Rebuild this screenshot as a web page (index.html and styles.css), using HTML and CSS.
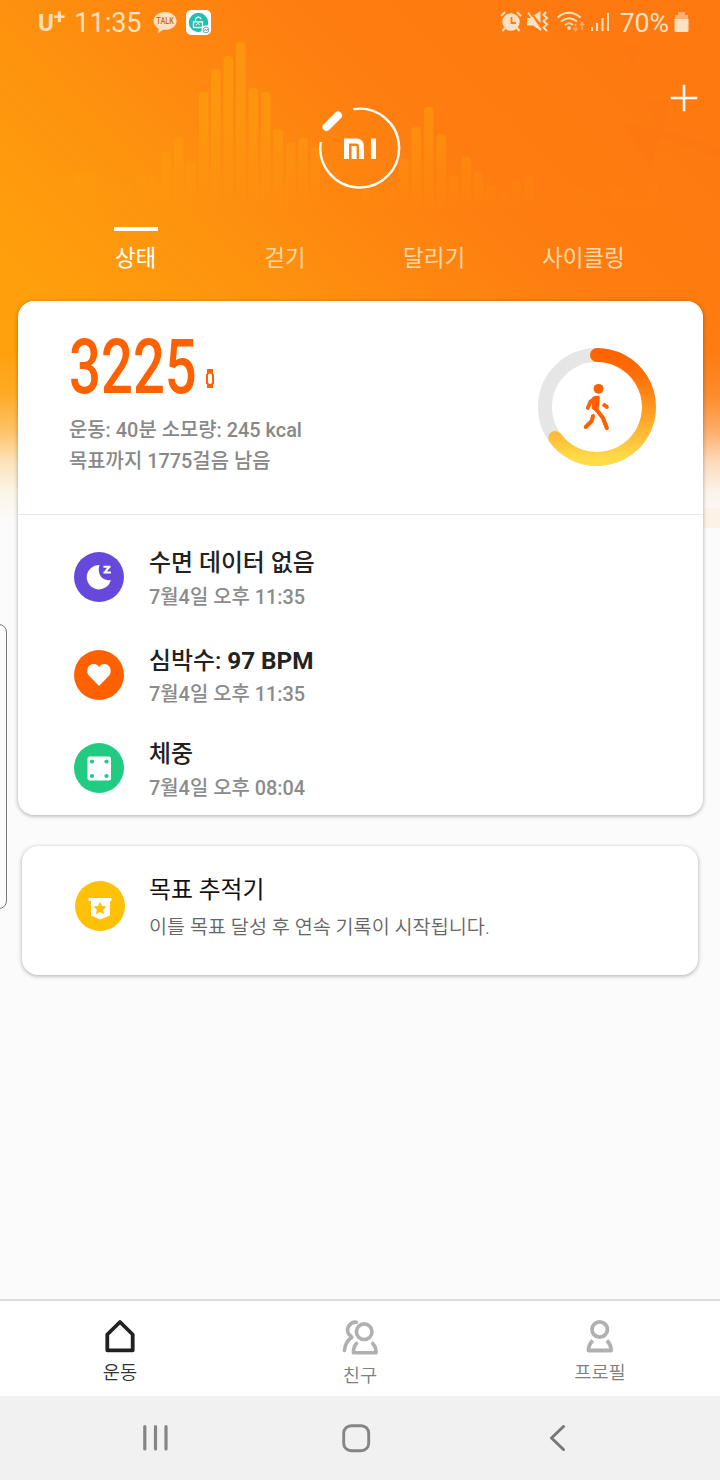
FILE: index.html
```html
<!DOCTYPE html>
<html lang="ko">
<head>
<meta charset="utf-8">
<title>Mi Fit</title>
<link rel="stylesheet" href="styles.css">
</head>
<body>
<div class="phone">
  <div class="backdrop"></div>
  <svg class="bars" width="720" height="220" viewBox="0 0 720 220">
    <defs>
      <linearGradient id="fade" gradientUnits="userSpaceOnUse" x1="0" y1="40" x2="0" y2="212">
        <stop offset="0" stop-color="#ffa60c" stop-opacity=".52"/>
        <stop offset=".5" stop-color="#ffa60c" stop-opacity=".42"/>
        <stop offset="1" stop-color="#ffa60c" stop-opacity="0"/>
      </linearGradient>
    </defs>
    <g fill="url(#fade)">
      <path opacity=".7" d="M64 212V183h9v29zM76 212V173h9v39zM86 212V174h9v38zM98 212V185h9v27zM111 212V185h9v27zM124 212V185h9v27zM136 212V176h9v36zM149 212V176h9v36z"/>
      <rect x="161.500" y="152" width="9.500" height="60" rx="4"/>
      <rect x="174" y="138" width="9.500" height="74" rx="4"/>
      <rect x="186.500" y="162" width="9.500" height="50" rx="4"/>
      <rect x="199" y="92" width="9.500" height="120" rx="4"/>
      <rect x="211" y="69" width="9.500" height="143" rx="4"/>
      <rect x="223.500" y="56" width="9.500" height="156" rx="4"/>
      <rect x="236" y="42" width="9.500" height="170" rx="4"/>
      <rect x="248.500" y="88" width="9.500" height="124" rx="4"/>
      <rect x="261" y="92" width="9.500" height="120" rx="4"/>
      <rect x="273.500" y="129" width="9.500" height="83" rx="4"/>
      <rect x="286" y="143" width="9.500" height="69" rx="4"/>
      <rect x="298.500" y="138" width="9.500" height="74" rx="4"/>
      <rect x="311" y="147" width="9.500" height="65" rx="4"/>
      <rect x="361.500" y="190" width="9.500" height="22" rx="4"/>
      <rect x="374" y="190" width="9.500" height="22" rx="4"/>
      <rect x="386.500" y="189" width="9.500" height="23" rx="4"/>
      <rect x="399" y="158" width="9.500" height="54" rx="4"/>
      <rect x="411.500" y="127" width="9.500" height="85" rx="4"/>
      <rect x="424" y="107" width="9.500" height="105" rx="4"/>
      <rect x="436.500" y="134" width="9.500" height="78" rx="4"/>
      <rect x="449" y="176" width="9.500" height="36" rx="4"/>
      <rect x="461.500" y="157" width="9.500" height="55" rx="4"/>
      <rect x="474" y="171" width="9.500" height="41" rx="4"/>
      <rect x="486.500" y="185" width="9.500" height="27" rx="4"/>
      <rect x="499" y="190" width="9.500" height="22" rx="4"/>
      <rect x="511.500" y="180" width="9.500" height="32" rx="4"/>
      <rect x="524" y="176" width="9.500" height="36" rx="4"/>
      <path opacity=".6" d="M537 212v-18h9v18zM549 212v-14h9v14zM562 212v-13h9v13zM574 212v-23h9v23zM587 212v-19h9v19zM599 212v-13h9v13zM612 212v-23h9v23zM624 212v-10h9v10zM637 212v-15h9v15zM649 212v-27h9v27z"/>
    </g>
    <path fill="#ff6a12" opacity=".16" d="M622 44h22l-12 23zM644 100h24l-4 30 56 18v10l-60-20-10 30-26-45 36 8z"/>
  </svg>

  <header class="status">
    <div class="status-side">
      <span class="carrier">U<sup>+</sup></span>
      <span class="clock">11:35</span>
      <svg class="talk" width="24" height="23" viewBox="0 0 24 23">
        <path fill="#ffe0c0" d="M12 1C5.500 1 .5 5 .5 10c0 3.300 2 6 5.200 7.500L5 22l5.300-3.200c8 .7 13.200-3.600 13.200-8.800C23.500 5 18.500 1 12 1z"/>
        <text class="talk-text" x="3.300" y="13" textLength="17.500" lengthAdjust="spacingAndGlyphs">TALK</text>
      </svg>
      <svg class="lock-app" width="25" height="25" viewBox="0 0 25 25">
        <rect width="25" height="25" rx="5" fill="#fff"/>
        <circle cx="12.500" cy="12.500" r="9.700" fill="#25beb1"/>
        <path d="M9.500 11.500V9.800a2.900 2.900 0 0 1 5.700-.4M7.500 11.800h9v5.700h-9z" fill="none" stroke="#fff" stroke-width="1.300"/>
        <path d="M10 15l2-1.700 2 1.700" fill="none" stroke="#fff"/>
        <circle cx="20" cy="20" r="4.500" fill="#fff"/>
        <circle cx="20" cy="20" r="2.900" fill="none" stroke="#5a8b93" stroke-width=".8"/>
        <path d="M18.200 20.500l1.500-1 1 .8 1.300-1" fill="none" stroke="#456" stroke-width=".8"/>
      </svg>
    </div>
    <div class="status-side">
      <svg class="signals" width="114" height="24" viewBox="0 0 114 24" fill="none" stroke="#ffe0c0">
        <circle cx="11" cy="12" r="8.700" fill="#ffe0c0" stroke="none"/>
        <path d="M1 6l4-4M17 2l4 4M5 18l-2.500 3M17 18l2.500 3" stroke-width="2"/>
        <path d="M11.500 7v6h4.500" stroke="#ff7c10" stroke-width="1.800"/>
        <path d="M27 8h4.500l1.500-1 8 13v1l-8-5.500h-6zM34 5.500L40.500 1v12z" fill="#ffe0c0" stroke="none"/>
        <path d="M28 2.500L41 20" stroke-width="1.600"/>
        <path d="M46 2l-2.500 3 3.500 3-3.500 3.300 3.500 3-3.500 3.200L47 21" stroke-width="2"/>
        <path d="M57.500 7.500q11.500-9.500 23 0M61 11.500q8-6.500 16 0M65 15q4-3.400 8 0" stroke-width="2"/>
        <circle cx="69" cy="18" r="1.900" fill="#ffe0c0" stroke="none"/>
        <path d="M75.500 14v6M73.500 18l2 2.500 2-2.500M82 20v-7M80 15l2-2.500 2 2.500" stroke-width="1.600" opacity=".5"/>
        <path d="M92 17v4" stroke-width="2"/><path d="M97 13v8M102.500 8v13M108 3v18" stroke-width="2"/>
      </svg>
      <span class="percent">70%</span>
      <svg width="15" height="22" viewBox="0 0 15 22">
        <path fill="#ffb070" d="M4 1h7v3h3v6H1V4h3z"/>
        <path fill="#ffe0c0" d="M.5 8h14v11.500a1.500 1.500 0 0 1-1.500 1.500H2a1.500 1.500 0 0 1-1.500-1.500z"/>
      </svg>
    </div>
  </header>

  <section class="hero">
    <svg class="logo" width="84" height="84" viewBox="0 0 84 84" fill="none" stroke="#fff">
      <path d="M35.500 3.200A39.400 39.400 0 1 1 2.800 36" stroke-width="2.400"/>
      <path d="M8.500 21L20 9.500" stroke-width="8" stroke-linecap="round"/>
      <path d="M28.500 53V35H38Q43.500 35 43.500 41V53M36.100 40v13M55.500 32.500V53" stroke-width="5"/>
    </svg>
    <svg class="plus" width="28" height="28" viewBox="0 0 28 28"><path d="M14 .7v26.600M.7 14h26.600" stroke="#fff" stroke-width="2.600"/></svg>
  </section>

  <nav class="tabs">
    <span class="tab tab-active">상태</span>
    <span class="tab">걷기</span>
    <span class="tab">달리기</span>
    <span class="tab">사이클링</span>
  </nav>

  <main class="content">
    <section class="card main-card">
      <div class="summary">
        <div class="summary-text">
          <div class="steps"><span class="step-count">3225</span>
            <svg class="band" width="8" height="20" viewBox="0 0 8 20"><path fill="#ff6000" d="M1 0h6v4.500l1 1v9l-1 1V19H1v-3.500l-1-1v-9l1-1z"/><rect x="2" y="4.500" width="4" height="10.500" rx="2" fill="#fff"/></svg>
          </div>
          <p class="detail">운동: 40분 소모량: 245 kcal</p>
          <p class="detail">목표까지 1775걸음 남음</p>
        </div>
        <svg class="ring" width="120" height="120" viewBox="0 0 120 120" fill="none">
          <defs><linearGradient id="ringfill" x1="0" y1="0" x2="0" y2="1">
            <stop offset="0" stop-color="#ff6300"/><stop offset=".2" stop-color="#ff6f08"/><stop offset=".6" stop-color="#ffa528"/><stop offset="1" stop-color="#ffdc48"/>
          </linearGradient></defs>
          <circle cx="60" cy="60" r="52" stroke="#e6e6e6" stroke-width="14"/>
          <path d="M60 8A52 52 0 1 1 18.300 91.100" stroke="url(#ringfill)" stroke-width="14" stroke-linecap="round"/>
          <g stroke="#ff6000" stroke-linecap="round" stroke-linejoin="round">
            <circle cx="61.500" cy="41.800" r="4.900" fill="#ff6000" stroke="none"/>
            <path d="M58.500 50.800L53.500 54.500l-2.700 6.500" stroke-width="3.800"/>
            <path d="M59 62l7 9L69.800 81" stroke-width="4.200"/>
            <path d="M56.500 51L61.500 50 61 59 59.500 63.500 56 61z" fill="#ff6000" stroke-width="2.600"/>
            <path d="M66 57l4 3" stroke-width="4" stroke-linecap="butt"/>
            <circle cx="69.800" cy="60" r="2" fill="#ff6000" stroke="none"/>
            <path d="M56 69l-1.300 5-6 6" stroke-width="4"/>
          </g>
        </svg>
      </div>

      <div class="entry">
        <svg class="badge" width="50" height="50" viewBox="0 0 50 50"><circle cx="25" cy="25" r="25" fill="#6748dc"/>
          <path fill="#fff" d="M25.500 13A12.200 12.200 0 1 0 36.800 28Q34 28.500 31 27.500C25.500 25.500 23.500 18.500 25.500 13z"/>
          <path d="M29.500 14.700h7M29.500 20.600h7.500" stroke="#fff" stroke-width="2"/><path d="M35 15l-4 5.300" stroke="#fff" stroke-width="2.200"/></svg>
        <div><h2 class="entry-title">수면 데이터 없음</h2><p class="entry-time">7월4일 오후 11:35</p></div>
      </div>
      <div class="entry">
        <svg class="badge" width="50" height="50" viewBox="0 0 50 50"><circle cx="25" cy="25" r="25" fill="#ff6000"/>
          <path fill="#fff" d="M25 36L14.800 25.500C11.500 21.500 13.800 14 19.500 14c2.500 0 4.500 1.200 5.500 3.200 1-2 3-3.200 5.500-3.200 5.700 0 8 7.500 4.700 11.500z"/></svg>
        <div><h2 class="entry-title">심박수: <b>97 BPM</b></h2><p class="entry-time">7월4일 오후 11:35</p></div>
      </div>
      <div class="entry entry-last">
        <svg class="badge" width="50" height="50" viewBox="0 0 50 50"><circle cx="25" cy="25" r="25" fill="#21cc82"/>
          <rect x="13.500" y="13.500" width="23.500" height="24" rx="2" fill="#fff"/>
          <g fill="#21cc82"><circle cx="18" cy="18.500" r="2.100"/><circle cx="32.500" cy="18.500" r="2.100"/><circle cx="18" cy="33" r="2.100"/><circle cx="32.500" cy="33" r="2.100"/></g></svg>
        <div><h2 class="entry-title">체중</h2><p class="entry-time">7월4일 오후 08:04</p></div>
      </div>
    </section>

    <section class="card goal-card">
      <svg class="badge" width="50" height="50" viewBox="0 0 50 50"><circle cx="25" cy="25" r="25" fill="#ffc107"/>
        <path fill="#fff" d="M13.500 17h23v3h-1.500V34.500L25 38.500 16 34.500V20h-2.500z"/>
        <path fill="#ffc107" d="M25 20.700l2 4.200 4.600.6-3.400 3.200.9 4.600-4.100-2.200-4.100 2.200.9-4.600-3.400-3.200 4.600-.6z"/></svg>
      <div><h2 class="goal-title">목표 추적기</h2><p class="goal-text">이틀 목표 달성 후 연속 기록이 시작됩니다.</p></div>
    </section>
  </main>

  <nav class="bottom">
    <div class="item item-active">
      <svg width="40" height="40" viewBox="0 0 40 40" fill="none" stroke="#202020" stroke-width="3.800" stroke-linejoin="round"><path d="M20 5L32.700 17.500V33.300H7.300V17.500z"/></svg>
      <span>운동</span>
    </div>
    <div class="item item-friends">
      <svg width="40" height="40" viewBox="0 0 40 40" fill="none" stroke="#b0b0b0" stroke-width="3.600" stroke-linecap="round" stroke-linejoin="round"><circle cx="24.200" cy="14.700" r="7.800"/><path d="M16.500 26.500q-3.500 4-3 9.300h22.500q.3-5.500-3.300-9.300M16.500 5.200C9.500 4.500 5.500 12 8.800 17l3 3.200Q5 25 4.500 33.500"/></svg>
      <span>친구</span>
    </div>
    <div class="item">
      <svg width="40" height="40" viewBox="0 0 40 40" fill="none" stroke="#b0b0b0" stroke-width="3.800" stroke-linejoin="round"><circle cx="19.700" cy="12.500" r="7.700"/><path d="M12.800 23.500Q8.500 27.500 8.500 33.500h22.600q0-6-4.300-10"/></svg>
      <span>프로필</span>
    </div>
  </nav>
  <footer class="system">
    <svg width="28" height="28" viewBox="0 0 28 28" stroke="#858585" stroke-width="3.200" stroke-linecap="round"><path d="M3.800 2.500v22.500M14.500 2.500v22.500M25 2.500v22.500"/></svg>
    <svg class="home-key" width="30" height="30" viewBox="0 0 30 30"><rect x="2.700" y="2.700" width="25" height="25" rx="7.500" fill="none" stroke="#858585" stroke-width="2.900"/></svg>
    <svg width="20" height="28" viewBox="0 0 20 28" fill="none" stroke="#777" stroke-width="3" stroke-linecap="round" stroke-linejoin="round"><path d="M15.500 2.500L3.500 14l12 11.500"/></svg>
  </footer>
  <div class="edge-handle"></div>
</div>
</body>
</html>
```

FILE: styles.css
```css
* { box-sizing: border-box; }
body {
  margin: 0;
  font-family: Roboto, "Noto Sans CJK KR", sans-serif;
  background: #fbfbfb;
}
h2, p { margin: 0; }
svg { display: block; flex: none; }
.phone {
  position: relative;
  width: 720px;
  height: 1480px;
  display: flex;
  flex-direction: column;
  overflow: hidden;
}
.backdrop {
  position: absolute;
  inset: 0 0 auto;
  height: 528px;
  background:
    linear-gradient(#fdf2e6, #fdf2e6) 100% 508px / 20px 20px no-repeat,
    linear-gradient(180deg, rgba(251,251,251,0) 350px, rgba(251,248,244,.12) 395px, rgba(251,248,244,.38) 430px, rgba(251,249,246,.75) 462px, rgba(252,250,246,.94) 492px, #fbfbfb 520px),
    linear-gradient(45deg, #ffa10c 0, #ff9f0c 22%, #fe930e 40%, #fe8610 54%, #fe7c10 68%, #fe7910 100%);
}
.bars { position: absolute; top: 0; left: 0; }
.status {
  position: relative;
  height: 46px;
  padding: 0 31px 2px 38px;
  display: flex;
  align-items: center;
  justify-content: space-between;
  color: #ffe0c0;
}
.status-side { display: flex; align-items: center; }
.carrier { padding-top: 2px; font-size: 24px; line-height: 44px; font-weight: 700; }
.carrier sup { font-size: 21px; line-height: 0; vertical-align: 7px; }
.clock { margin-left: 9px; padding-top: 2px; font-size: 27px; line-height: 44px; }
.talk { margin-left: 11px; }
.talk-text { font-size: 8.5px; font-weight: 500; fill: #d06a10; }
.lock-app { margin-left: 9px; }
.percent { margin: 0 5px 0 6px; padding-top: 2px; font-size: 26.600px; line-height: 44px; }
.hero {
  position: relative;
  height: 181px;
  padding-top: 60px;
  display: flex;
  justify-content: center;
}
.plus { position: absolute; top: 38px; right: 22.500px; }
.tabs {
  position: relative;
  height: 74px;
  padding: 0 62px 0 61px;
  display: grid;
  grid-template-columns: repeat(4, 1fr);
  justify-items: center;
  align-items: start;
}
.tab {
  border-top: 4px solid transparent;
  padding-top: 13px;
  font-size: 22.5px;
  line-height: 28px;
  color: #ffd9a8;
}
.tab-active { border-color: #fff; color: #fff; width: 44px; text-align: center; white-space: nowrap; }
.content { position: relative; flex: 1; }
.card {
  background: #fff;
  border-radius: 16px;
  box-shadow: 0 1px 4px rgba(0,0,0,.32);
}
.main-card { margin: 0 17.500px; height: 514px; }
.summary {
  height: 214px;
  border-bottom: 1px solid #e8e8e8;
  padding: 28px 45.500px 0 51.500px;
  display: flex;
  justify-content: space-between;
}
.steps { height: 86px; display: flex; }
.step-count {
  width: 129px;
  font-size: 76.500px;
  line-height: 76px;
  font-weight: 500;
  color: #ff6000;
  transform: scaleX(.735);
  transform-origin: 0 0;
}
.band { margin: 40px 0 0 8px; }
.detail { font-size: 19.9px; line-height: 31px; font-weight: 500; color: #888; }
.ring { margin-top: 18px; }
.entry { display: flex; height: 97.500px; padding: 37px 0 0 56px; }
.entry .badge { margin-right: 25.500px; }
.entry-last { padding-top: 33px; }
.entry-title { margin-top: -6px; font-size: 23.9px; line-height: 34px; font-weight: 500; color: #222; }
.entry-title b { font-size: 24.300px; font-weight: 700; }
.entry-time { margin-top: .6px; font-size: 19.9px; line-height: 34px; font-weight: 500; color: #8b8b8b; }
.goal-card { margin: 31px 22px 0; height: 129px; display: flex; padding: 35px 0 0 52.500px; }
.goal-card .badge { margin-right: 24.500px; }
.goal-title { margin-top: -8px; font-size: 23.8px; line-height: 34px; font-weight: 400; color: #111; }
.goal-text { margin-top: 4px; font-size: 19.650px; line-height: 34px; font-weight: 350; color: #666; }
.bottom {
  position: relative;
  height: 97px;
  border-top: 2px solid #dedede;
  background: #fff;
  display: grid;
  grid-template-columns: repeat(3, 1fr);
}
.item {
  padding-top: 16px;
  display: flex;
  flex-direction: column;
  align-items: center;
  font-size: 18.700px;
  line-height: 32px;
  font-weight: 350;
  color: #808080;
}
.item-active { color: #333; }
.item-friends span { padding-top: 3px; }
.system {
  position: relative;
  height: 84px;
  background: #f1f1f1;
  display: flex;
  justify-content: space-between;
  align-items: center;
  padding: 0 152px 0 141px;
}
.home-key { margin-right: 5px; }
.edge-handle {
  position: absolute;
  left: -14px;
  top: 624px;
  width: 21px;
  height: 285px;
  border: 1.500px solid #777;
  border-radius: 8px;
}
```
